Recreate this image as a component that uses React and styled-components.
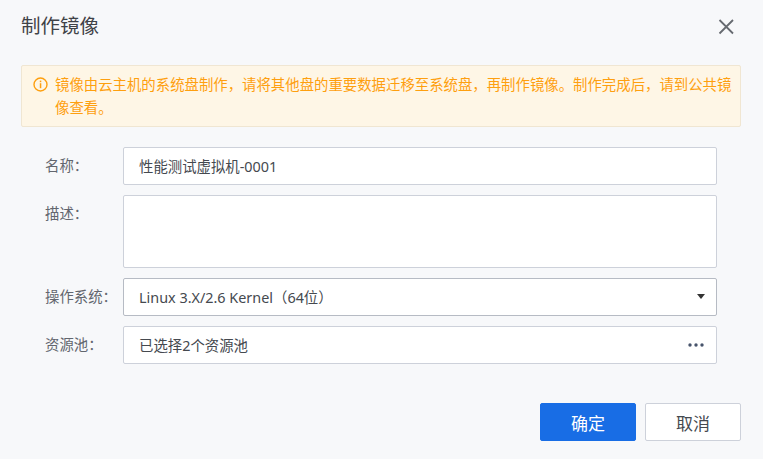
import React from 'react';
import styled, { createGlobalStyle } from 'styled-components';

const Global = createGlobalStyle`
  html, body { margin: 0; padding: 0; background: #f7f8fa; }
  body { font-family: "Noto Sans", "Noto Sans CJK SC", sans-serif; }
  * { box-sizing: border-box; }
`;
const Dialog = styled.div`
  width: 763px; height: 459px; background: #f7f8fa; padding: 0 22px 0 21px;
  display: flex; flex-direction: column; overflow: hidden;
`;
const Header = styled.header`
  height: 65px; display: flex; align-items: flex-start; justify-content: space-between; padding-top: 12px;
`;
const Title = styled.h1`
  margin: 0; font-size: 19.5px; line-height: 28px; font-weight: 400; color: #3f4247;
`;
const Close = styled.button`
  border: 0; background: none; padding: 0; width: 20px; height: 20px; margin-top: 5px; margin-right: 5px; display: flex; color: #666a70;
`;
const Alert = styled.div`
  height: 62px; background: #fef6e6; border: 1px solid #f0e6d2; border-radius: 2px;
  padding: 7px 4px 0 11px; display: flex; gap: 7px; color: #fe9f0f;
  font-size: 14.4px; line-height: 23px;
`;
const AlertIcon = styled.svg`
  flex: none; width: 15px; height: 15px; margin-top: 4px;
`;
const Form = styled.form`
  margin-top: 20px; display: flex; flex-direction: column; gap: 10px; padding-left: 24px; padding-right: 24px;
`;
const Row = styled.div`
  display: flex; align-items: flex-start;
`;
const Label = styled.label`
  width: 78px; height: 38px; flex: none; padding-top: 1px; font-size: 14.4px; line-height: 36px; color: #62666e; white-space: nowrap;
`;
const Field = styled.div`
  flex: 1; height: ${p => p.$h || 38}px; background: #fff;
  border: 1px solid ${p => p.$dark ? '#b6bbc4' : '#cdd1da'}; border-radius: 2px;
  padding: 0 15px 1px; display: flex; align-items: center; justify-content: space-between;
  font-size: 14.4px; color: #45494f; white-space: nowrap;
`;
const Arrow = styled.span`
  width: 0; height: 0; border-left: 4.5px solid transparent; border-right: 4.5px solid transparent;
  border-top: 5px solid #333; margin-right: -4px;
`;
const Dots = styled.svg`
  width: 16px; height: 4px; margin-right: -3px; flex: none;
`;
const Footer = styled.footer`
  margin-top: 39px; display: flex; justify-content: flex-end; gap: 9px;
`;
const Button = styled.button`
  width: 96px; height: 38px; border-radius: 2px; padding: 0; font-family: inherit; font-size: 17px;
  border: 1px solid ${p => p.$primary ? '#186de5' : '#cdd1da'};
  background: ${p => p.$primary ? '#186de5' : '#fff'};
  color: ${p => p.$primary ? '#fff' : '#45494f'};
`;

export default function App() {
  return (
    <Dialog>
      <Global />
      <Header>
        <Title>制作镜像</Title>
        <Close aria-label="关闭">
          <svg width="20" height="20" viewBox="0 0 20 20" fill="none" stroke="currentColor" strokeWidth="1.8">
            <path d="M3.5 3 L17 16.5 M17 3 L3.5 16.5" />
          </svg>
        </Close>
      </Header>
      <Alert>
        <AlertIcon viewBox="0 0 15 15" fill="none">
          <circle cx="7.5" cy="7.5" r="6.5" stroke="#fe9f0f" strokeWidth="1.4" />
          <rect x="6.8" y="3.6" width="1.5" height="1.6" fill="#fe9f0f" />
          <rect x="6.8" y="6.2" width="1.5" height="5" fill="#fe9f0f" />
        </AlertIcon>
        <div>镜像由云主机的系统盘制作，请将其他盘的重要数据迁移至系统盘，再制作镜像。制作完成后，请到公共镜像查看。</div>
      </Alert>
      <Form>
        <Row><Label>名称：</Label><Field>性能测试虚拟机-0001</Field></Row>
        <Row><Label>描述：</Label><Field $h={73} /></Row>
        <Row><Label>操作系统：</Label><Field $dark>Linux 3.X/2.6 Kernel（64位）<Arrow /></Field></Row>
        <Row>
          <Label>资源池：</Label>
          <Field>已选择2个资源池
            <Dots viewBox="0 0 16 4"><circle cx="2" cy="2" r="1.7" fill="#47536b" /><circle cx="8" cy="2" r="1.7" fill="#47536b" /><circle cx="14" cy="2" r="1.7" fill="#47536b" /></Dots>
          </Field>
        </Row>
      </Form>
      <Footer>
        <Button $primary>确定</Button>
        <Button>取消</Button>
      </Footer>
    </Dialog>
  );
}
